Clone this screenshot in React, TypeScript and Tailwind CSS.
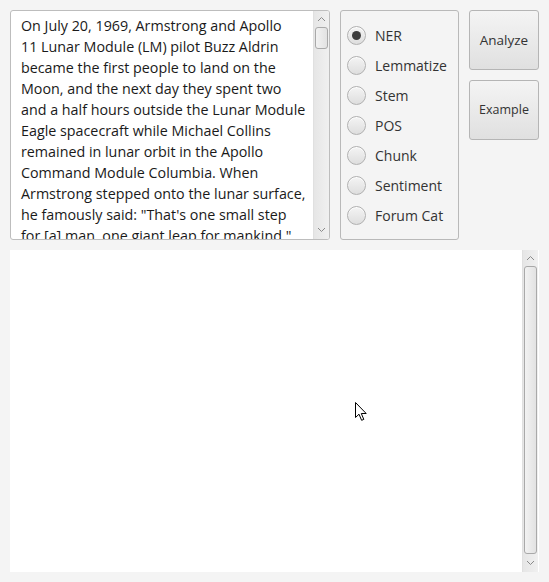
import { useState } from 'react';

const LINES = [
  'On July 20, 1969, Armstrong and Apollo',
  '11 Lunar Module (LM) pilot Buzz Aldrin',
  'became the first people to land on the',
  'Moon, and the next day they spent two',
  'and a half hours outside the Lunar Module',
  'Eagle spacecraft while Michael Collins',
  'remained in lunar orbit in the Apollo',
  'Command Module Columbia. When',
  'Armstrong stepped onto the lunar surface,',
  'he famously said: "That\'s one small step',
  'for [a] man, one giant leap for mankind."',
];

const MODES = ['NER', 'Lemmatize', 'Stem', 'POS', 'Chunk', 'Sentiment', 'Forum Cat'];

function Chevron({ up }: { up?: boolean }) {
  return (
    <svg width="9" height="6" viewBox="0 0 9 6" className="block">
      <path
        d={up ? 'M1 5 L4.5 1.5 L8 5' : 'M1 1 L4.5 4.5 L8 1'}
        fill="none"
        stroke="#8a8a8a"
        strokeWidth="1"
      />
    </svg>
  );
}

function ScrollBar({ thumbH, grow }: { thumbH?: number; grow?: boolean }) {
  return (
    <div className="w-[16px] h-full flex flex-col items-center bg-gradient-to-r from-[#e6e6e6] to-[#f0f0f0] border-l border-[#e0e0e0]">
      <div className="h-[16px] flex items-center justify-center">
        <Chevron up />
      </div>
      <div className="flex-1 w-full px-[1px] flex flex-col">
        <div
          className={`w-full rounded-[3px] border border-[#a9a9a9] bg-gradient-to-r from-[#f2f2f2] to-[#e2e2e2] ${grow ? 'flex-1' : ''}`}
          style={grow ? undefined : { height: thumbH }}
        />
      </div>
      <div className="h-[18px] flex items-center justify-center">
        <Chevron />
      </div>
    </div>
  );
}

export default function App() {
  const [mode, setMode] = useState('NER');

  return (
    <div
      className="w-[549px] h-[582px] bg-[#f4f4f4] p-[10px] flex flex-col gap-[10px] text-[#333333] relative"
      style={{ fontFamily: '"Open Sans", "Noto Sans", sans-serif' }}
    >
      <div className="flex gap-[10px] h-[230px]">
        {/* text input */}
        <div className="w-[320px] h-full bg-white border border-[#bdbdbd] rounded-[3px] flex overflow-hidden">
          <div className="flex-1 pl-[10px] pt-[4px] text-[14.3px] leading-[21px] overflow-hidden text-[#1a1a1a]">
            {LINES.map((l) => (
              <div key={l} className="whitespace-nowrap">
                {l}
              </div>
            ))}
          </div>
          <ScrollBar thumbH={22} />
        </div>

        {/* modes */}
        <div className="w-[119px] h-full border border-[#b9b9b9] rounded-[3px] pt-[9px] pl-[6px] flex flex-col">
          {MODES.map((m) => (
            <button
              key={m}
              onClick={() => setMode(m)}
              className="h-[30px] flex items-center gap-[9px] text-left"
            >
              <span className="w-[19px] h-[19px] rounded-full border border-[#b0b0b0] bg-gradient-to-b from-[#f4f4f4] to-[#dedede] flex items-center justify-center shadow-[inset_0_1px_0_#ffffff]">
                {mode === m && <span className="w-[9px] h-[9px] rounded-full bg-[#3d3d3d]" />}
              </span>
              <span className="text-[14px] text-[#333333]">{m}</span>
            </button>
          ))}
        </div>

        {/* buttons */}
        <div className="w-[70px] flex flex-col gap-[10px]">
          {['Analyze', 'Example'].map((b) => (
            <button
              key={b}
              className={`h-[60px] w-full rounded-[3px] border border-[#b5b5b5] bg-gradient-to-b from-[#f4f4f4] to-[#e0e0e0] text-[#333333] ${b === 'Analyze' ? 'text-[13.5px]' : 'text-[12.5px]'}`}
            >
              {b}
            </button>
          ))}
        </div>
      </div>

      {/* output */}
      <div className="flex-1 bg-white flex pr-[1px]">
        <div className="flex-1" />
        <ScrollBar grow />
      </div>

      {/* mouse pointer */}
      <svg
        width="13"
        height="20"
        viewBox="0 0 13 20"
        className="absolute left-[355px] top-[402px] pointer-events-none"
      >
        <path
          d="M0.5 0.5 L0.5 15.5 L4 12.2 L6.6 18.3 L8.8 17.4 L6.3 11.5 L11.2 11.5 Z"
          fill="#ffffff"
          stroke="#000000"
          strokeWidth="1"
          strokeLinejoin="miter"
        />
      </svg>
    </div>
  );
}
